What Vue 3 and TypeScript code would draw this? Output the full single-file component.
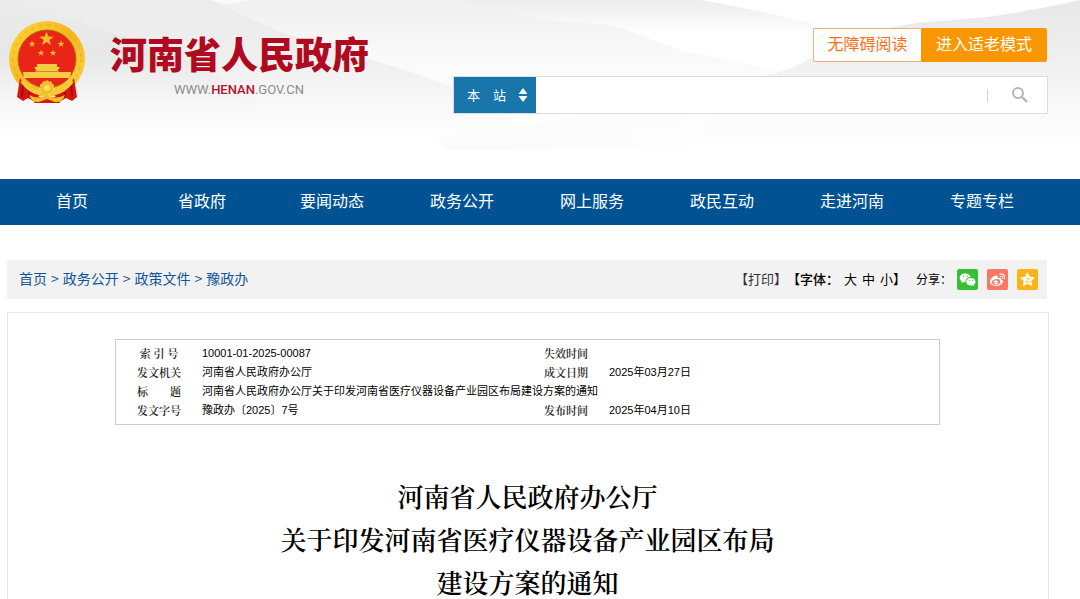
<script setup lang="ts">
import { ref } from 'vue'

interface InfoRow {
  label: string
  value: string
  label2?: string
  value2?: string
}

const navItems: string[] = ['首页', '省政府', '要闻动态', '政务公开', '网上服务', '政民互动', '走进河南', '专题专栏']
const crumbs: string[] = ['首页', '政务公开', '政策文件', '豫政办']
const sizes: string[] = ['大', '中', '小']
const rows: InfoRow[] = [
  { label: '索 引 号', value: '10001-01-2025-00087', label2: '失效时间', value2: '' },
  { label: '发文机关', value: '河南省人民政府办公厅', label2: '成文日期', value2: '2025年03月27日' },
  { label: '标　　题', value: '河南省人民政府办公厅关于印发河南省医疗仪器设备产业园区布局建设方案的通知' },
  { label: '发文字号', value: '豫政办〔2025〕7号', label2: '发布时间', value2: '2025年04月10日' },
]
const titleLines: string[] = ['河南省人民政府办公厅', '关于印发河南省医疗仪器设备产业园区布局', '建设方案的通知']
const scope = ref('site')
const keyword = ref('')
const star = 'M0-10 2.4-3.2 9.5-3.1 3.8 1.2 5.9 8.1 0 4 -5.9 8.1 -3.8 1.2 -9.5-3.1 -2.4-3.2Z'
</script>

<template>
  <div class="page">
    <header class="header">
      <svg class="waves" viewBox="0 0 1080 179" preserveAspectRatio="none" aria-hidden="true">
        <defs>
          <linearGradient id="w1" gradientUnits="userSpaceOnUse" x1="0" y1="0" x2="0" y2="150">
            <stop offset="0" stop-color="#ebebeb" /><stop offset=".4" stop-color="#efefef" /><stop offset=".72" stop-color="#f9f9f9" /><stop offset=".95" stop-color="#fff" />
          </linearGradient>
          <linearGradient id="w2" gradientUnits="userSpaceOnUse" x1="0" y1="0" x2="0" y2="150">
            <stop offset="0" stop-color="#efefef" /><stop offset=".4" stop-color="#fafafa" /><stop offset=".9" stop-color="#fff" />
          </linearGradient>
          <linearGradient id="w3" gradientUnits="userSpaceOnUse" x1="0" y1="0" x2="0" y2="34">
            <stop offset="0" stop-color="#ececec" /><stop offset="1" stop-color="#fff" />
          </linearGradient>
          <linearGradient id="w4" gradientUnits="userSpaceOnUse" x1="0" y1="0" x2="0" y2="150">
            <stop offset="0" stop-color="#e8e8e8" /><stop offset=".35" stop-color="#eeeeee" /><stop offset=".75" stop-color="#fafafa" /><stop offset="1" stop-color="#fff" />
          </linearGradient>
          <linearGradient id="w5" gradientUnits="userSpaceOnUse" x1="0" y1="0" x2="0" y2="110">
            <stop offset="0" stop-color="#000" stop-opacity="0" /><stop offset=".5" stop-color="#000" stop-opacity=".03" /><stop offset="1" stop-color="#000" stop-opacity="0" />
          </linearGradient>
          <linearGradient id="w6" x1="0" y1="0" x2="1" y2="0">
            <stop offset="0" stop-color="#fbfbfb" /><stop offset="1" stop-color="#fbfbfb" stop-opacity="0" />
          </linearGradient>
        </defs>
        <path fill="url(#w3)" d="M440 0H700Q762 11 830 27L780 60H640Z" />
        <path fill="url(#w2)" d="M205 0H464C520 15 550 23 600 24C640 30 670 52 710 56C760 66 800 78 860 92V150H205Z" />
        <path fill="#fff" opacity=".6" d="M210 0H252L227 5Z" />
        <path fill="url(#w1)" d="M0 0H208C250 18 270 28 290 35C340 50 410 70 452 87L560 150H0Z" />
        <path fill="url(#w5)" d="M0 2Q90 22 160 50Q230 75 260 110H0Z" />
        <path fill="url(#w6)" d="M438 138Q520 125 590 115L900 114V150H445Z" />
        <path fill="url(#w4)" d="M750 79Q790 72 813 57Q860 33 893 27C930 19 970 21 1007 14Q1050 7 1080 0V150H680Z" />
      </svg>
      <div class="header-body">
        <a class="brand" href="#" aria-label="河南省人民政府">
          <svg class="emblem" viewBox="0 0 78 84" aria-hidden="true">
            <defs>
              <linearGradient id="gold" x1="0" y1="0" x2="1" y2="1">
                <stop offset="0" stop-color="#ffd83d" /><stop offset=".5" stop-color="#f3b61f" /><stop offset="1" stop-color="#ffd744" />
              </linearGradient>
            </defs>
            <circle cx="39" cy="38" r="38" fill="url(#gold)" />
            <circle cx="39" cy="38" r="34" fill="none" stroke="#e3a520" stroke-width="1" stroke-dasharray="3 5" />
            <circle cx="39" cy="38" r="29" fill="#ea2518" stroke="#a97116" stroke-width="1" />
            <g fill="#f3bd27">
              <path :d="star" transform="translate(38.5 18) scale(.76)" />
              <path :d="star" transform="translate(24 23) scale(.36)" />
              <path :d="star" transform="translate(53 23) scale(.36)" />
              <path :d="star" transform="translate(33 32) scale(.34)" />
              <path :d="star" transform="translate(45 32) scale(.34)" />
            </g>
            <path d="M29 43H49V46H52L50 49V51H28V49L26 46H29ZM15 51H63L62 57H16Z" fill="#f9cb40" />
            <path d="M27 50.500H51" stroke="#d78a1c" stroke-width="1" />
            <path d="M12 57Q19 72 31 74L29 82 20 77 15 80 9 76ZM66 57Q59 72 47 74L49 82 58 77 64 80 69 76Z" fill="#d91510" />
            <path d="M15 64 14 76M63 64 64 76M21 71V76M57 71V76" stroke="#a80808" stroke-width="2" fill="none" />
            <path d="M14 60Q22 71 33 72M64 60Q56 71 45 72" stroke="#f8ca37" stroke-width="4" fill="none" />
            <circle cx="39" cy="67" r="7" fill="#f5bd2a" stroke="#fff08a" stroke-width="1" stroke-dasharray="2 2" />
            <circle cx="39" cy="67" r="3" fill="#ffe05a" />
            <path d="M29 76H49L52 82H26Z" fill="#d91510" />
            <path d="M21 74Q31 79 38 74Q47 79 57 74Q54 82 47 81L39 78 31 81Q24 82 21 74Z" fill="#f6bd26" />
          </svg>
          <span class="brand-text">
            <span class="brand-name">河南省人民政府</span>
            <span class="brand-url">WWW.<b>HENAN</b>.GOV.CN</span>
          </span>
        </a>
        <div class="tools">
          <div class="modes">
            <button type="button" class="mode outline">无障碍阅读</button>
            <button type="button" class="mode solid">进入适老模式</button>
          </div>
          <form class="search" @submit.prevent>
            <div class="scope">
              <select v-model="scope" aria-label="搜索范围">
                <option value="site">本　站</option>
              </select>
              <svg class="arrows" viewBox="0 0 10 14" aria-hidden="true"><path d="M5 0 9.5 6H.5ZM5 14 .5 8H9.5Z" fill="#fff" /></svg>
            </div>
            <input v-model="keyword" class="keyword" type="text" aria-label="搜索关键词" />
            <button type="submit" class="go" aria-label="搜索">
              <svg viewBox="0 0 16 16" aria-hidden="true"><circle cx="6" cy="6" r="5" fill="none" stroke="#b5b5b5" stroke-width="2" /><path d="M9.5 9.5 15 15" stroke="#b5b5b5" stroke-width="2.4" /></svg>
            </button>
          </form>
        </div>
      </div>
    </header>

    <nav class="nav">
      <a v-for="item in navItems" :key="item" href="#">{{ item }}</a>
    </nav>

    <main class="main">
      <div class="bar">
        <div class="crumbs">
          <template v-for="(c, i) in crumbs" :key="c">
            <span v-if="i > 0">&gt;</span>
            <a href="#">{{ c }}</a>
          </template>
        </div>
        <div class="actions">
          <button type="button" class="print">【打印】</button>
          <div class="sizes">
            <span class="size-label">【字体：</span>
            <button v-for="s in sizes" :key="s" type="button">{{ s }}</button>
            <span>】</span>
          </div>
          <div class="share">
            <span class="share-label">分享：</span>
            <a href="#" class="ico wechat" aria-label="微信">
              <svg viewBox="0 0 21 21" aria-hidden="true">
                <path fill="#fff" d="M8.2 4.5C5 4.500 2.700 6.400 2.700 8.900C2.700 10.300 3.500 11.500 4.700 12.300L4.300 14L6.300 13C7 13.200 7.700 13.300 8.400 13.300C8.200 10.400 10.800 8 13.700 8.100C13.200 6 11 4.500 8.200 4.500Z" />
                <path fill="#fff" d="M13.800 8.900C11.200 8.900 9.200 10.600 9.200 12.700C9.200 14.900 11.200 16.500 13.800 16.500C14.400 16.500 15 16.400 15.500 16.200L17.200 17.100L16.800 15.600C17.900 14.900 18.500 13.900 18.500 12.700C18.500 10.600 16.400 8.900 13.800 8.900Z" />
                <g fill="#38bf38"><circle cx="6.500" cy="7.600" r=".7" /><circle cx="10.200" cy="7.600" r=".7" /><circle cx="12.300" cy="11.500" r=".6" /><circle cx="15.400" cy="11.500" r=".6" /></g>
              </svg>
            </a>
            <a href="#" class="ico weibo" aria-label="微博">
              <svg viewBox="0 0 21 21" aria-hidden="true">
                <path fill="#fff" d="M8.800 6.600C6.400 7 2.700 10.300 2.900 13C3.100 15.500 6 16.900 9.200 16.900C13 16.900 16 14.700 16 12.600C16 11.300 15 10.700 14 10.400C14.500 9 13.500 8.100 10.700 9.100C11.100 7.500 10.500 6.400 8.800 6.600Z" />
                <ellipse cx="9" cy="13" rx="4.300" ry="2.900" fill="#f97866" transform="rotate(-8 9 13)" />
                <circle cx="8.600" cy="13.200" r="2" fill="#fff" /><circle cx="8" cy="13.700" r=".8" fill="#f97866" />
                <path d="M12.800 5.200C15.800 4.400 18.200 6.600 17.400 9.700M13.200 7.300C14.700 7 15.700 7.900 15.400 9.300" fill="none" stroke="#fff" stroke-width="1.100" stroke-linecap="round" />
              </svg>
            </a>
            <a href="#" class="ico qzone" aria-label="QQ空间">
              <svg viewBox="0 0 21 21" aria-hidden="true">
                <path fill="#fff" stroke="#fff" stroke-linejoin="round" d="M10.500 3.800 12.500 8.200 17.300 8.700 13.700 11.900 14.700 16.600 10.500 14.200 6.300 16.600 7.300 11.900 3.700 8.700 8.500 8.200Z" />
                <path d="M9.500 9.500H12.300L9 12.500Q11.500 13.500 14 12.800" fill="none" stroke="#fdb516" stroke-width=".8" />
              </svg>
            </a>
          </div>
        </div>
      </div>

      <article class="panel">
        <table class="info">
          <colgroup><col class="c-label" /><col class="c-value" /><col class="c-label" /><col /></colgroup>
          <tbody>
            <tr v-for="r in rows" :key="r.label">
              <th scope="row">{{ r.label }}</th>
              <td :colspan="r.label2 ? 1 : 3">{{ r.value }}</td>
              <template v-if="r.label2">
                <th scope="row">{{ r.label2 }}</th>
                <td>{{ r.value2 }}</td>
              </template>
            </tr>
          </tbody>
        </table>
        <h1 class="title"><span v-for="l in titleLines" :key="l">{{ l }}</span></h1>
      </article>
    </main>
  </div>
</template>

<style>
html, body { background: #fff; overflow-x: hidden; }
</style>

<style scoped>
.page { display: flex; flex-direction: column; min-height: 100vh; font-family: "Liberation Sans", "Noto Sans CJK SC", sans-serif; color: #000; }
a { text-decoration: none; color: inherit; }
button { font: inherit; color: inherit; border: 0; background: none; padding: 0; cursor: pointer; }
.header { position: relative; }
.waves { position: absolute; inset: 0; width: 100%; height: 100%; }
.header-body { position: relative; display: flex; justify-content: space-between; gap: 24px; padding: 21px 32px 65px 8px; }
.brand { display: flex; align-items: flex-start; gap: 24px; }
.emblem { width: 78px; height: 84px; flex: none; }
.brand-text { display: flex; flex-direction: column; align-items: flex-end; padding-top: 8px; }
.brand-name { font: 900 37px/48px "Noto Sans CJK SC", sans-serif; color: #b00a20; white-space: nowrap; }
.brand-url { font: 13px/20px Roboto, sans-serif; color: #8c8c8c; padding: 3px 65px 0 0; }
.brand-url b { font-weight: 500; color: #b5122b; }
.tools { flex: 0 1 595px; padding-top: 7px; display: flex; flex-direction: column; gap: 14px; }
.modes { display: flex; justify-content: flex-end; padding-right: 1px; }
.mode { height: 34px; font-size: 16px; line-height: 32px; border: 1px solid #ffab7c; white-space: nowrap; }
.outline { width: 108px; background: #fff; color: #ff6d1a; border-right: 0; border-radius: 2px 0 0 2px; }
.solid { width: 126px; background: #fa9600; color: #fff; border-color: #fa9600; border-radius: 0 2px 2px 0; }
.search { display: flex; height: 38px; box-sizing: border-box; border: 1px solid #dcdcdc; background: #fff; }
.scope { position: relative; flex: none; width: 82px; background: #1976ab; }
.scope select { appearance: none; width: 100%; height: 100%; border: 0; background: none; color: #fff; font: 13px "Noto Sans CJK SC", sans-serif; padding: 0 0 2px 13px; }
.arrows { position: absolute; right: 8px; top: 11px; width: 10px; height: 14px; pointer-events: none; }
.keyword { flex: 1; min-width: 0; border: 0; padding: 0 12px; font-size: 14px; outline: none; background: none; }
.go { display: flex; align-items: center; justify-content: center; width: 60px; padding-left: 6px; position: relative; }
.go::before { content: ""; position: absolute; left: 0; top: 12px; height: 13px; border-left: 1px solid #d5d5d5; }
.go svg { width: 16px; height: 16px; }
.nav { display: grid; grid-template-columns: repeat(8, 1fr); padding: 0 33px 0 7px; background: #005293; color: #fff; font-size: 16px; line-height: 46px; text-align: center; }
.main { flex: 1; display: flex; flex-direction: column; padding: 35px 31px 0 7px; }
.bar { display: flex; align-items: center; justify-content: space-between; min-height: 39px; margin-right: 2px; padding: 0 9px 0 12px; box-sizing: border-box; background: #f2f2f2; white-space: nowrap; }
.crumbs { display: flex; gap: 4px; padding-bottom: 3px; font: 14px/20px "Noto Sans CJK SC", sans-serif; color: #10559a; }
.actions { display: flex; align-items: center; font: 13px/20px "Noto Sans CJK SC", sans-serif; }
.print { color: #333; padding-bottom: 2px; }
.sizes { display: flex; gap: 5px; padding-bottom: 2px; }
.size-label { font-weight: 500; }
.sizes span:last-child { margin-left: -5px; }
.share { display: flex; align-items: center; gap: 9px; margin-left: 10px; }
.share-label { font-size: 12px; margin-right: -4px; padding-bottom: 2px; }
.ico { display: block; width: 21px; height: 21px; border-radius: 2px; }
.ico svg { display: block; width: 21px; height: 21px; }
.wechat { background: #38bf38; }
.weibo { background: #f97866; }
.qzone { background: #fdb516; }
.panel { flex: 1; margin-top: 13px; padding: 26px 108px 0 107px; border: 1px solid #e6e6e6; border-bottom: 0; }
.info { width: 100%; table-layout: fixed; border-collapse: separate; border-spacing: 0; border: 1px solid #ccc; padding: 4px 0; font-size: 11px; line-height: 19px; }
.c-label { width: 86px; }
.c-value { width: 39%; }
.info th, .info td { padding: 0; height: 19px; text-align: left; white-space: nowrap; }
.info th { text-align: center; font-family: "Noto Serif CJK SC", "Noto Sans CJK SC", serif; font-weight: 600; color: #222; }
.title { display: flex; flex-direction: column; gap: 17px; margin: 58px 0 0; font: 600 26px/26px "Noto Serif CJK SC", "Noto Sans CJK SC", serif; text-align: center; }
</style>
